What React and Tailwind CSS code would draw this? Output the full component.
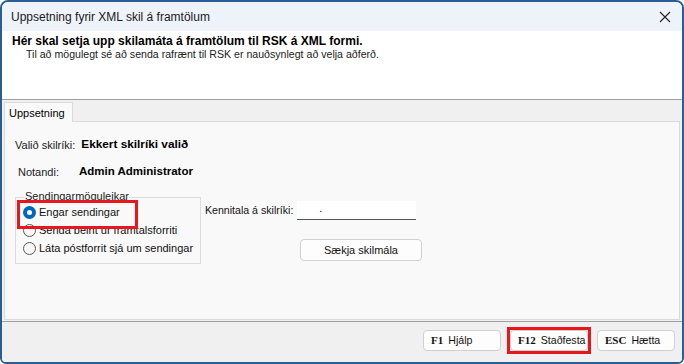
import React from "react";

const font = { fontFamily: '"Liberation Sans", Arial, sans-serif' };

const Radio = ({ checked, label }) => (
  <div className="flex items-center h-[18px]">
    {checked ? (
      <span className="w-[13px] h-[13px] rounded-full bg-[#0067c0] flex items-center justify-center">
        <span className="w-[5px] h-[5px] rounded-full bg-white" />
      </span>
    ) : (
      <span className="w-[13px] h-[13px] rounded-full border border-[#595959] bg-[#f7f7f7]" />
    )}
    <span className="ml-[3px] text-[11px] text-[#111]">{label}</span>
  </div>
);

const FooterButton = ({ hotkey, label, highlight }) => (
  <div className="relative w-[78px] h-[21px]">
    <button className="w-full h-full rounded-[4px] border border-[#d0d0d0] bg-[#fdfdfd] flex items-center pl-[7px] text-[10.6px] text-[#111] whitespace-nowrap">
      <span className="font-bold text-[11px] mr-[5px]" style={{ fontFamily: '"Liberation Serif", serif' }}>{hotkey}</span>
      {label}
    </button>
    {highlight && <div className="absolute -inset-[3px] border-[3px] border-[#e8161d] pointer-events-none" />}
  </div>
);

export default function App() {
  return (
    <div style={font} className="w-[684px] h-[364px] bg-white">
      <div className="w-full h-full border-2 border-[#2b5c93] rounded-t-[8px] rounded-b-[6px] overflow-hidden flex flex-col">
        {/* Title bar */}
        <div className="h-[29px] bg-[#eef3fa] flex items-center justify-between pl-[9px] pr-[8px] shrink-0">
          <span className="text-[12px] text-[#1a1a1a]">Uppsetning fyrir XML skil á framtölum</span>
          <svg width="12" height="12" viewBox="0 0 12 12" className="mr-[3px]">
            <path d="M1 1 L11 11 M11 1 L1 11" stroke="#222" strokeWidth="1.1" />
          </svg>
        </div>

        {/* Header */}
        <div className="h-[69px] bg-white border-b border-[#a0a0a0] shrink-0 pl-[10px] pt-[3px]">
          <div className="text-[12px] font-bold text-black leading-[14px]">Hér skal setja upp skilamáta á framtölum til RSK á XML formi.</div>
          <div className="text-[10.6px] text-[#222] pl-[14px] leading-[13px]">Til að mögulegt sé að senda rafrænt til RSK er nauðsynlegt að velja aðferð.</div>
        </div>

        {/* Body */}
        <div className="flex-1 bg-[#f0f0f0] flex flex-col">
          <div className="px-[2px] pt-[2px] flex flex-col flex-1">
            <div className="flex">
              <div className="w-[69px] h-[20px] bg-[#f9f9f9] border border-b-0 border-[#d9d9d9] text-[11px] text-black pl-[4px] pt-[2px] -mb-px relative z-10">
                Uppsetning
              </div>
            </div>
            <div className="h-[199px] bg-[#f9f9f9] border border-[#d9d9d9] pl-[10px] pt-[15px]">
              <div className="flex items-center h-[16px] text-[11px]">
                <span className="text-[#222]">Valið skilríki:</span>
                <span className="ml-[6px] font-bold text-[11.8px] text-black">Ekkert skilríki valið</span>
              </div>
              <div className="flex items-center h-[16px] mt-[11px] text-[11px] pl-[3px]">
                <span className="w-[61px] text-[#222]">Notandi:</span>
                <span className="font-bold text-[11.5px] text-black">Admin Administrator</span>
              </div>

              <div className="flex mt-[17px]">
                <div className="relative w-[186px] h-[67px] border border-[#dcdcdc] pt-[5px] pl-[7px]">
                  <span className="absolute -top-[8px] left-[9px] text-[11px] text-[#222] bg-[#f9f9f9] leading-[13px]">Sendingarmöguleikar</span>
                  <Radio checked label="Engar sendingar" />
                  <Radio label="Senda beint úr framtalsforriti" />
                  <Radio label="Láta póstforrit sjá um sendingar" />
                  <div className="absolute left-[1px] top-[2px] w-[121px] h-[29px] border-[3px] border-[#e8161d] pointer-events-none" />
                </div>

                <div className="ml-[4px] pt-[4px]">
                  <div className="flex items-center">
                    <span className="text-[10.6px] text-[#111]">Kennitala á skilríki:</span>
                    <div className="ml-[4px] w-[119px] h-[19px] bg-white border-b border-[#555] text-[11px] pl-[22px] leading-[15px]">.</div>
                  </div>
                  <button className="ml-[95px] mt-[19px] w-[122px] h-[22px] rounded-[4px] border border-[#d0d0d0] bg-[#fdfdfd] text-[11px] text-[#111]">
                    Sækja skilmála
                  </button>
                </div>
              </div>
            </div>
          </div>

          {/* Footer */}
          <div className="h-[41px] border-t border-[#a0a0a0] flex items-center justify-end gap-[9px] pr-[7px] pb-[3px] shrink-0 mt-[1px]">
            <FooterButton hotkey="F1" label="Hjálp" />
            <FooterButton hotkey="F12" label="Staðfesta" highlight />
            <FooterButton hotkey="ESC" label="Hætta" />
          </div>
        </div>
      </div>
    </div>
  );
}
